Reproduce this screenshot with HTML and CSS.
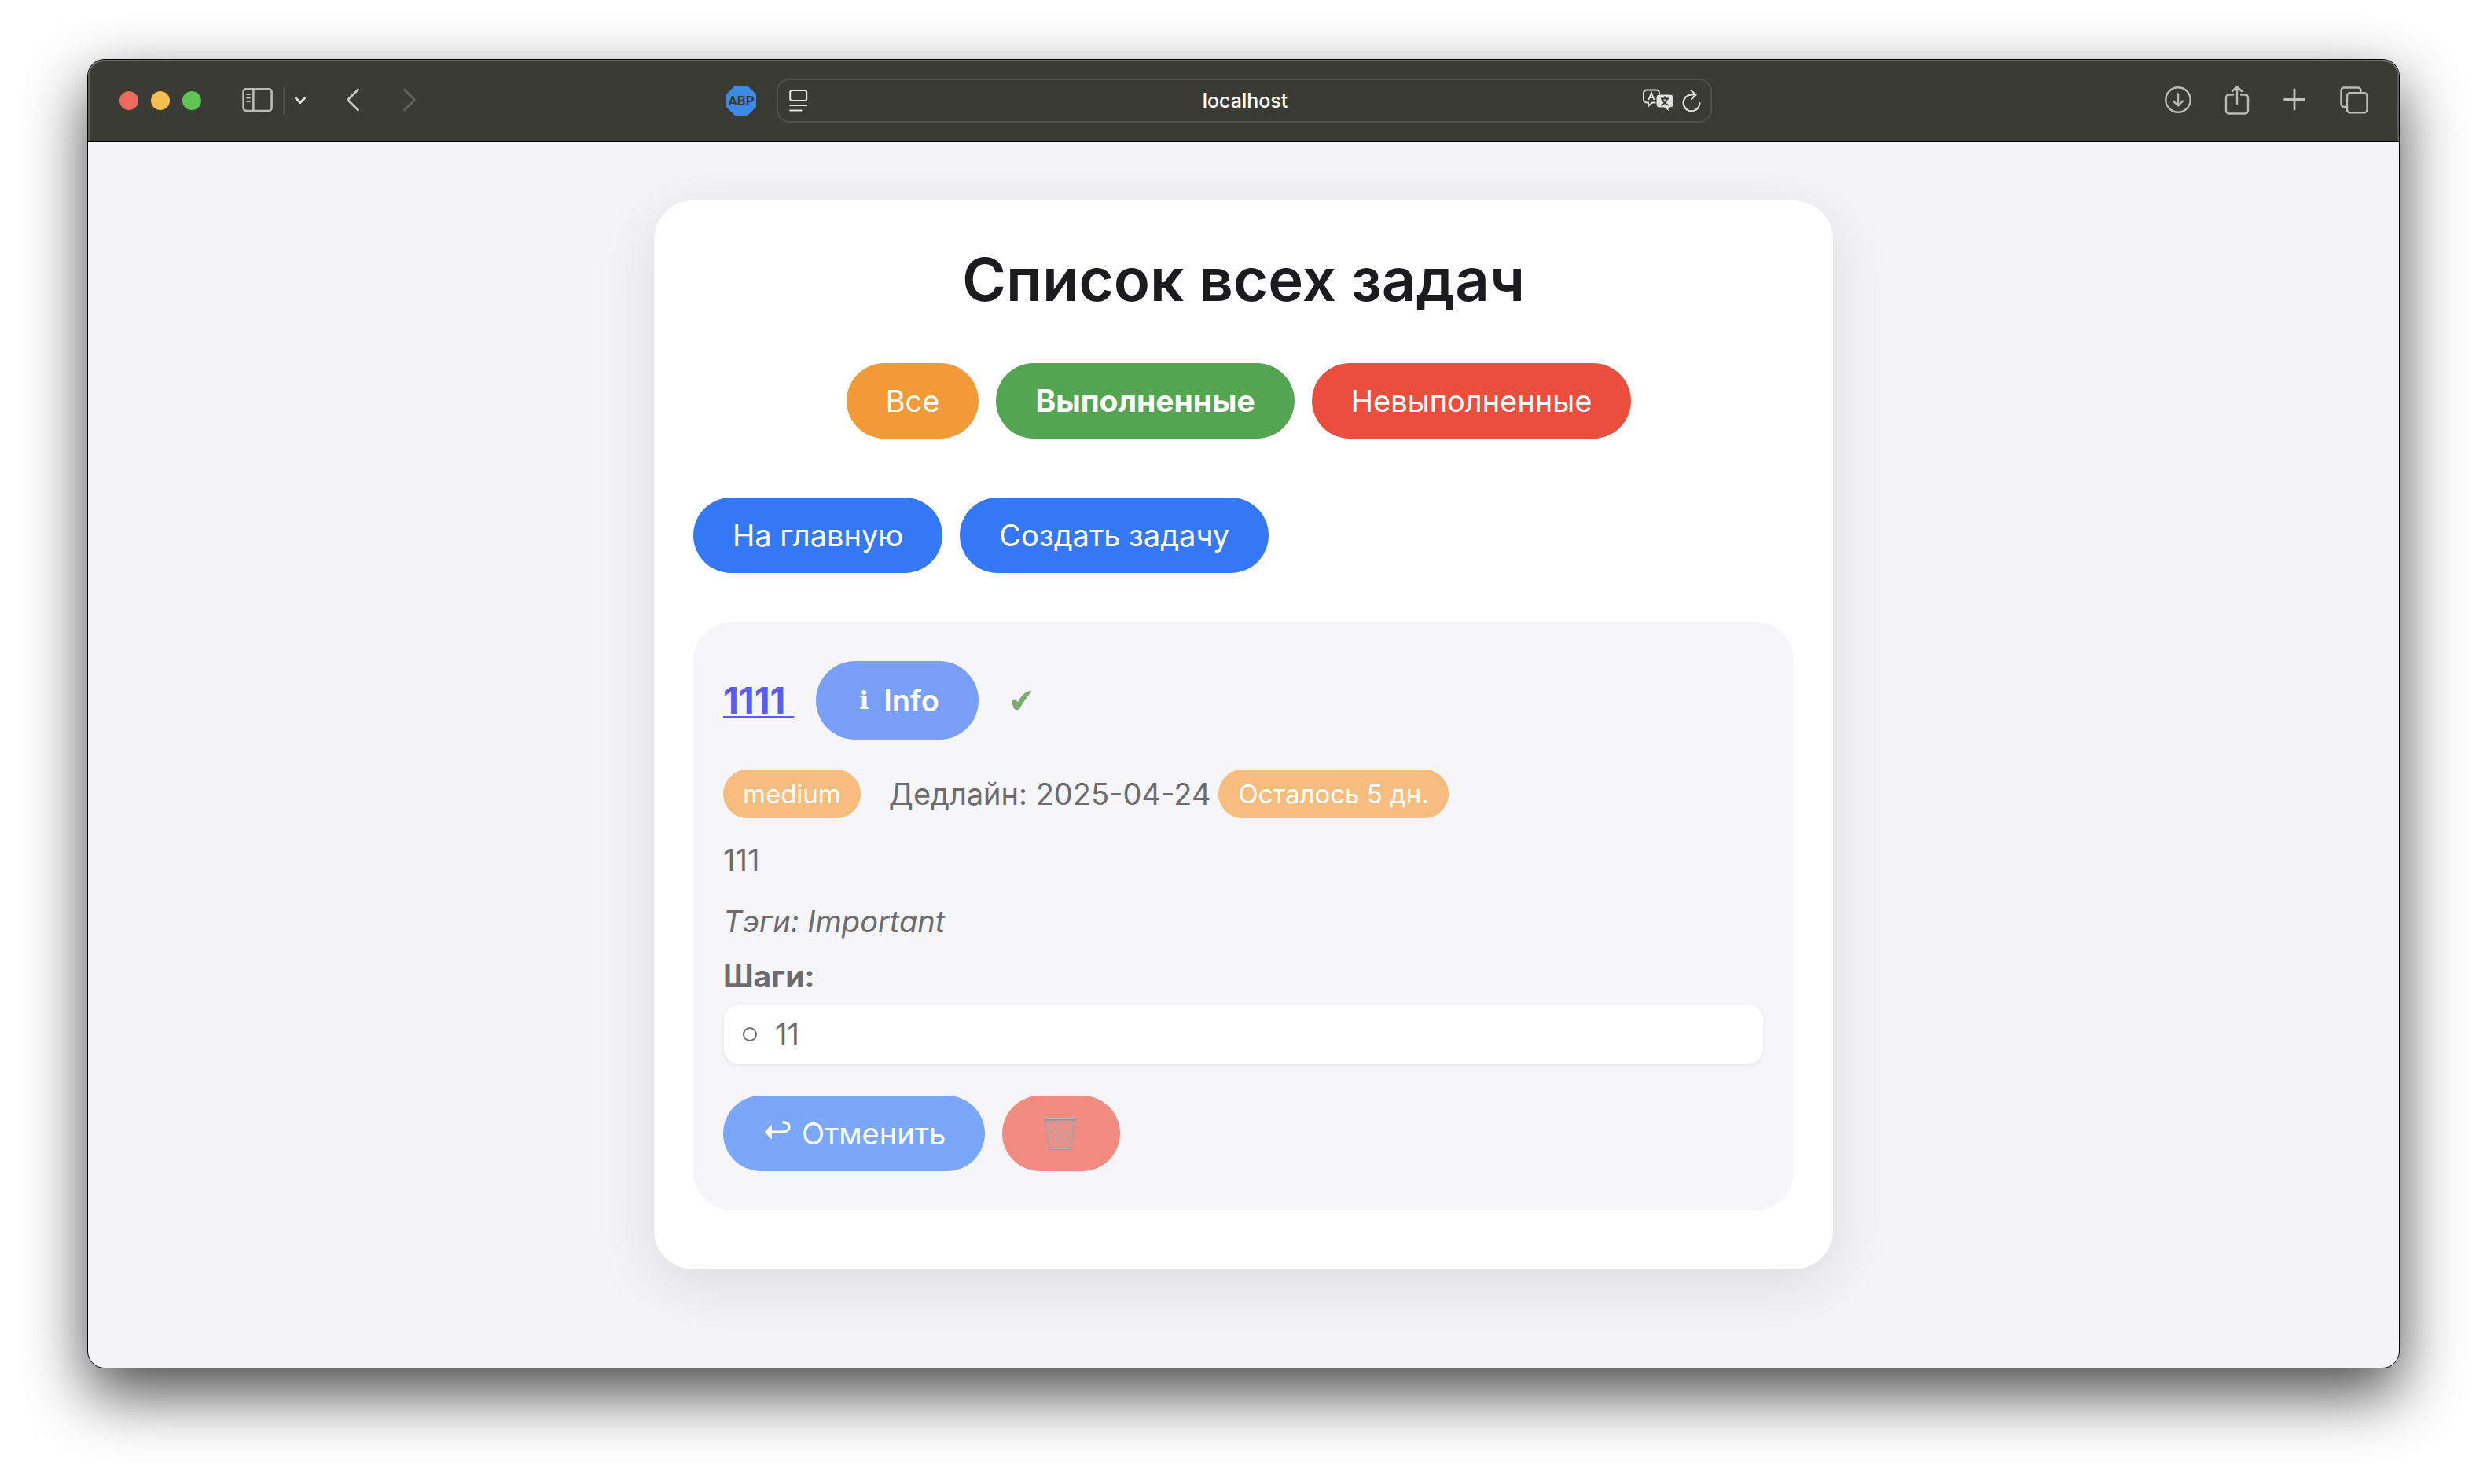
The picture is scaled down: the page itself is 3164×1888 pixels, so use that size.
FILE: index.html
```html
<!DOCTYPE html>
<html lang="ru">
<head>
<meta charset="utf-8">
<meta name="viewport" content="width=device-width, initial-scale=1">
<title>Список всех задач</title>
<link rel="stylesheet" href="styles.css">
</head>
<body>
<div class="window">
  <header class="toolbar">
    <div class="toolbar-left">
      <div class="lights">
        <span class="light light-close"></span>
        <span class="light light-min"></span>
        <span class="light light-max"></span>
      </div>
      <div class="sidebar-group">
        <button class="tool" type="button" aria-label="Sidebar">
          <svg width="40" height="32" viewBox="0 0 40 32" fill="none" stroke="#bcbcb7" stroke-width="2.6" stroke-linecap="round"><rect x="1.6" y="1" width="36" height="28" rx="4"/><path d="M14.4 1v28"/><path stroke-width="1.8" d="M6 8h4M6 12.5h4M6 17h4"/></svg>
        </button>
        <span class="divider"></span>
        <button class="tool" type="button" aria-label="Tab groups">
          <svg width="16" height="12" viewBox="0 0 16 12" fill="none" stroke="#e8e8e3" stroke-width="3" stroke-linecap="round" stroke-linejoin="round"><path d="M2.500 3L8 8.500 13.500 3"/></svg>
        </button>
      </div>
      <div class="history">
        <button class="tool" type="button" aria-label="Back">
          <svg width="18" height="32" viewBox="0 0 18 32" fill="none" stroke="#c6c6c1" stroke-width="2.800" stroke-linecap="round" stroke-linejoin="round"><path d="M15.500 2L2.500 15l13 13"/></svg>
        </button>
        <button class="tool" type="button" aria-label="Forward">
          <svg width="18" height="32" viewBox="0 0 18 32" fill="none" stroke="#63635e" stroke-width="2.800" stroke-linecap="round" stroke-linejoin="round"><path d="M2.500 2l13 13-13 13"/></svg>
        </button>
      </div>
      <button class="tool blocker" type="button" aria-label="Adblock Plus">
        <svg width="38" height="38" viewBox="0 0 38 38"><path fill="#3c8ae6" d="M11 0h16l11 11v16L27 38H11L0 27V11z"/></svg>
        <span class="blocker-label">ABP</span>
      </button>
    </div>
    <div class="address">
      <svg width="24" height="30" viewBox="0 0 24 30" fill="none" stroke="#e6e6e2" stroke-width="2" stroke-linecap="round"><rect x="1.200" y="2" width="21" height="13" rx="2.500"/><path d="M1.200 21h21M1.200 27.500h14.500"/></svg>
      <input class="address-input" type="text" value="localhost" aria-label="Address">
      <div class="address-tools">
        <svg width="40" height="30" viewBox="0 0 40 30" fill="none"><path d="M5 1.500h12a4 4 0 0 1 4 4v9a3 3 0 0 1-3 3h-6l-5 4.500v-4.500h-2a4 4 0 0 1-4-4v-8a4 4 0 0 1 4-4z" stroke="#e1e1dd" stroke-width="2"/><path d="M7.500 14L11 5l3.500 9M8.700 11h4.600" stroke="#e1e1dd" stroke-width="1.800"/><path d="M21 7h14a4 4 0 0 1 4 4v9a4 4 0 0 1-4 4h-2v5l-5-5h-7a4 4 0 0 1-4-4v-9a4 4 0 0 1 4-4z" fill="#e1e1dd" stroke="#3b3b36" stroke-width="1"/><path d="M23 12.500h10M28 9.500v3M25 13c1 4 4 6.500 8 8M31 13c-1 4-4 6.500-8 8" stroke="#3b3b36" stroke-width="1.800"/></svg>
        <svg width="24" height="30" viewBox="0 0 24 30" fill="none" stroke="#dededa" stroke-width="2.200" stroke-linecap="round" stroke-linejoin="round"><path d="M16 7.500H12a10.400 10.400 0 1 0 10.400 10.500M11.500 2l6 5.500-5.500 5.500"/></svg>
      </div>
    </div>
    <div class="toolbar-right">
      <button class="tool" type="button" aria-label="Downloads">
        <svg width="34" height="38" viewBox="1 0 34 38" fill="none" stroke="#bcbcb7" stroke-width="2.400" stroke-linecap="round" stroke-linejoin="round"><circle cx="18" cy="18" r="15.700"/><path d="M18 10.500v14.500M12 19.500l6 6 6-6"/></svg>
      </button>
      <button class="tool" type="button" aria-label="Share">
        <svg width="32" height="38" viewBox="0 0 32 38" fill="none" stroke="#bcbcb7" stroke-width="2.400" stroke-linecap="round" stroke-linejoin="round"><path d="M11 11.500H5.500A3.500 3.500 0 0 0 2 15v17a3.500 3.500 0 0 0 3.500 3.500h21A3.500 3.500 0 0 0 30 32V15a3.500 3.500 0 0 0-3.500-3.500H21M16 23V1.500M10 7l6-5.500L22 7"/></svg>
      </button>
      <button class="tool" type="button" aria-label="New tab">
        <svg width="30" height="38" viewBox="0 0 30 38" fill="none" stroke="#c2c2bd" stroke-width="2.800" stroke-linecap="round"><path d="M15 5v25M2.500 17.500h25"/></svg>
      </button>
      <button class="tool" type="button" aria-label="Tabs">
        <svg width="38" height="38" viewBox="0 0 38 38" fill="none" stroke="#bcbcb7" stroke-width="2.400"><rect x="10" y="9.200" width="25.500" height="25" rx="3.500"/><path d="M10 27H6a3.500 3.500 0 0 1-3.500-3.500V6A3.500 3.500 0 0 1 6 2.500h18a3.500 3.500 0 0 1 3.500 3.500v3"/></svg>
      </button>
    </div>
  </header>

  <main class="page">
    <section class="container">
      <h1 class="title">Список всех задач</h1>
      <nav class="filters">
        <a class="btn btn-orange" href="#all">Все</a>
        <a class="btn btn-green" href="#done">Выполненные</a>
        <a class="btn btn-red" href="#undone">Невыполненные</a>
      </nav>
      <nav class="actions">
        <a class="btn btn-blue" href="#home">На главную</a>
        <a class="btn btn-blue" href="#create">Создать задачу</a>
      </nav>

      <article class="task">
        <div class="task-head">
          <a class="task-link" href="#task">1111 </a>
          <a class="btn btn-info" href="#info"><span class="info-mark">i</span>Info</a>
          <svg class="check" width="26" height="26" viewBox="0 0 26 26"><path fill="#7eab70" stroke="#7eab70" stroke-width="1.500" stroke-linejoin="round" d="M1.500 15.500C1 12.500 4.500 11.500 6 14c.8 1.200.7 2.500 1.300 3C11 11 16 4 20.500 2.500c2-.7 3-.9 4-.8C20 7 14.500 14 11 21 9.500 23.800 8.500 24.500 6.300 24.500 3 24.500 2 20 1.500 15.500z"/></svg>
        </div>
        <div class="task-meta">
          <span class="badge">medium</span>
          <span class="deadline">Дедлайн: 2025-04-24</span>
          <span class="badge">Осталось 5 дн.</span>
        </div>
        <p class="task-text">111</p>
        <p class="task-tags">Тэги: Important</p>
        <p class="steps-title">Шаги:</p>
        <ul class="steps">
          <li class="step">11</li>
        </ul>
        <div class="task-buttons">
          <button class="btn btn-undo" type="button">
            <svg width="36" height="32" viewBox="-3 6 36 32"><path fill="none" stroke="#fff" stroke-width="3.400" d="M8 20.200h14.500c5.500 0 8.500-3.200 8.500-6.700S28 7.700 22.500 7.700"/><path fill="#fff" d="M0 20.200L9 10.500v19.400z"/></svg>
            Отменить
          </button>
          <button class="btn btn-delete" type="button" aria-label="Удалить">
            <svg width="50" height="48" viewBox="1 0 50 48" fill="none">
              <path stroke="#b9a7a9" stroke-width="1.500" d="M6 13l9-7M7 21L26 6M8 30L38 6M9 38L43 12M13 43l29-22M25 43l16-12M43 13l-9-7M42 21L23 6M41 30L11 6M40 38L6 12M36 43L7 21M24 43L8 31"/>
              <path stroke="#a5a2a5" stroke-width="1.500" d="M5.500 6l5 37M43.500 6l-5 37"/>
              <path stroke="#8b9096" stroke-width="4" stroke-linecap="round" d="M6 5.500h37"/>
              <path stroke="#b9bec4" stroke-width="1.500" stroke-linecap="round" d="M6 4.500h37"/>
              <path stroke="#8b95a2" stroke-width="3.500" stroke-linecap="round" d="M12 43.200h25"/>
              <path stroke="#c2cad6" stroke-width="1.500" stroke-linecap="round" d="M12 43h25"/>
            </svg>
          </button>
        </div>
      </article>
    </section>
  </main>
</div>
</body>
</html>
```
FILE: styles.css
```css
* {
  box-sizing: border-box;
}

body {
  margin: 0;
  min-height: 100vh;
  padding: 75px 111px 147px;
  display: flex;
  background: #fff;
  font-family: Inter, "Liberation Sans", sans-serif;
  font-size: 38px;
  line-height: 48px;
  color: #1c1c1e;
}

/* Browser window */
.window {
  flex: 1;
  display: flex;
  flex-direction: column;
  border: 1px solid #000;
  border-radius: 22px;
  background: #f4f4f7;
  box-shadow: 0 32px 80px rgba(0, 0, 0, 0.71);
  overflow: hidden;
}

.toolbar {
  display: grid;
  grid-template-columns: 1fr minmax(0, 1190px) 1fr;
  align-items: center;
  column-gap: 26px;
  height: 105px;
  padding: 0 38px 0 40px;
  background: #3b3b36;
  border-bottom: 1px solid #000;
  border-radius: 21px 21px 0 0;
  box-shadow: inset 0 2px 0 #6d6d69, inset 2px 0 0 #5c5c58, inset -2px 0 0 #5c5c58;
}

.toolbar-left,
.sidebar-group,
.history,
.lights,
.toolbar-right,
.address-tools {
  display: flex;
  align-items: center;
}

.lights {
  gap: 16px;
}

.light {
  width: 24px;
  height: 24px;
  border-radius: 50%;
}

.light-close { background: #ed6a5e; }
.light-min { background: #f5bf4f; }
.light-max { background: #61c554; }

.tool {
  display: flex;
  padding: 0;
  border: 0;
  background: none;
}

.sidebar-group {
  gap: 12px;
  margin-left: 52px;
}

.divider {
  width: 2px;
  height: 36px;
  background: #4c4c47;
}

.history {
  gap: 54px;
  margin-left: 50px;
}

.blocker {
  position: relative;
  margin-left: auto;
}

.blocker-label {
  position: absolute;
  inset: 0;
  font: 700 17px/38px Roboto, sans-serif;
  text-align: center;
  color: #3b3b36;
}

.address {
  display: grid;
  grid-template-columns: 76px 1fr 76px;
  align-items: center;
  height: 56px;
  padding: 0 12px 0 14px;
  border: 2px solid #50504b;
  border-radius: 16px;
}

.address-input {
  min-width: 0;
  padding: 0;
  border: 0;
  background: none;
  font: 500 25px/32px Inter, "Liberation Sans", sans-serif;
  text-align: center;
  color: #fff;
}

.address-tools {
  justify-content: flex-end;
  gap: 10px;
}

.toolbar-right {
  justify-content: flex-end;
  gap: 42px;
}

/* Page content */
.page {
  flex: 1;
  padding: 74px 40px;
}

.container {
  max-width: 1500px;
  margin: 0 auto;
  padding: 50px 50px 75px;
  border-radius: 50px;
  background: #fff;
  box-shadow: 0 20px 80px rgba(0, 0, 0, 0.1);
}

.title {
  margin: 0 0 57px;
  font-size: 76px;
  line-height: 100px;
  font-weight: 600;
  text-align: center;
}

.filters,
.actions,
.task-buttons {
  display: flex;
  flex-wrap: wrap;
  gap: 22px;
}

.filters {
  justify-content: center;
  padding-right: 12px;
  margin-bottom: 75px;
}

.actions {
  margin-bottom: 62px;
}

.btn {
  display: flex;
  align-items: center;
  padding: 24px 50px;
  border: 0;
  border-radius: 50px;
  font: inherit;
  color: #fff;
  text-decoration: none;
}

.btn-orange { background: #f29a38; }
.btn-green { background: #54a552; font-size: 39px; font-weight: 700; }
.btn-red { background: #eb4e3d; }
.btn-blue { background: #3578f6; }
.btn-undo { background: #7ba7f9; gap: 14px; }
.btn-delete { background: #f28c81; }

.task {
  padding: 50px 38px;
  border-radius: 50px;
  background: #f6f6f9;
  color: #6c6c6e;
}

.task-head {
  display: flex;
  align-items: center;
  margin-bottom: 38px;
}

.task-link {
  font-size: 46px;
  font-weight: 700;
  white-space: pre;
  color: #5c5cf0;
  text-underline-offset: 3px;
  text-decoration-thickness: 3px;
  text-decoration-skip-ink: none;
}

.btn-info {
  padding: 26px 50px;
  margin-left: 28px;
  background: #7a9ff8;
  font-weight: 600;
}

.info-mark {
  width: 36px;
  padding-left: 5px;
  font-family: "DejaVu Serif", serif;
  font-size: 32px;
  font-weight: 700;
}

.check {
  margin-left: 42px;
}

.task-meta {
  display: flex;
  align-items: center;
  margin-bottom: 29px;
}

.badge {
  padding: 10px 25px;
  border-radius: 32px;
  background: #f7bd7e;
  font-size: 33px;
  line-height: 42px;
  color: #fff;
}

.deadline {
  margin: 0 10px 0 36px;
}

.task-text {
  margin: 0 0 30px;
}

.task-tags {
  margin: 0 0 22px;
  font-style: italic;
}

.steps-title {
  margin: 0 0 12px;
  font-size: 39px;
  font-weight: 700;
}

.steps {
  margin: 0 0 40px;
  padding: 0 1px;
  list-style: none;
}

.step {
  display: flex;
  align-items: center;
  gap: 23px;
  padding: 14px 24px;
  border-radius: 20px;
  background: #fff;
  box-shadow: 0 2px 6px rgba(0, 0, 0, 0.06);
}

.step::before {
  content: "";
  width: 14px;
  height: 14px;
  border: 2px solid #6c6c6e;
  border-radius: 50%;
}
```
